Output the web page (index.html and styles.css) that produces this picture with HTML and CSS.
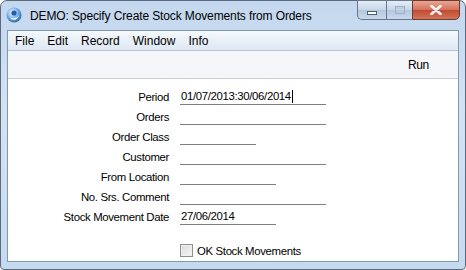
FILE: index.html
```html
<!DOCTYPE html>
<html lang="en">
<head>
  <meta charset="UTF-8" />
  <title>DEMO: Specify Create Stock Movements from Orders</title>
  <link rel="stylesheet" href="styles.css">
</head>
<body>
  <div class="window">
    <!-- Title bar -->
    <div class="titlebar">
      <svg class="app-icon" width="16" height="16" viewBox="0 0 16 16">
        <defs>
          <radialGradient id="g" cx="0.4" cy="0.35" r="0.7">
            <stop offset="0" stop-color="#ffffff"/>
            <stop offset="0.5" stop-color="#7fb4e6"/>
            <stop offset="1" stop-color="#1d5fa8"/>
          </radialGradient>
        </defs>
        <circle cx="8" cy="8" r="7.5" fill="url(#g)"/>
        <path d="M4 10 C5 14 12 14 13 8 C11 12 6 12 4 10 Z" fill="#ffffff"/>
        <circle cx="8" cy="6" r="2.6" fill="#1d5fa8"/>
      </svg>
      <span class="title">DEMO: Specify Create Stock Movements from Orders</span>
      <div class="controls">
        <div class="ctl ctl-min"><span class="min-bar"></span></div>
        <div class="ctl ctl-max"><span class="max-box"></span></div>
        <div class="ctl ctl-close">
          <svg width="12" height="10" viewBox="0 0 12 10">
            <path d="M1.5 1 L10.5 9 M10.5 1 L1.5 9" stroke="#ffffff" stroke-width="2.6" stroke-linecap="round"/>
            <path d="M1.5 1 L10.5 9 M10.5 1 L1.5 9" stroke="#d8d8d8" stroke-width="0.8"/>
          </svg>
        </div>
      </div>
    </div>

    <!-- Client area -->
    <div class="client">
      <div class="menubar">
        <span>File</span><span>Edit</span><span>Record</span><span>Window</span><span>Info</span>
      </div>
      <div class="toolbar">
        <span class="run">Run</span>
      </div>
      <div class="form">
        <div class="row"><label>Period</label><div class="field wide">01/07/2013:30/06/2014<span class="caret"></span></div></div>
        <div class="row"><label>Orders</label><div class="field wide"></div></div>
        <div class="row"><label>Order Class</label><div class="field short"></div></div>
        <div class="row"><label>Customer</label><div class="field wide"></div></div>
        <div class="row"><label>From Location</label><div class="field mid"></div></div>
        <div class="row"><label>No. Srs. Comment</label><div class="field wide"></div></div>
        <div class="row"><label>Stock Movement Date</label><div class="field mid">27/06/2014</div></div>
        <div class="check-row">
          <span class="checkbox"></span><span>OK Stock Movements</span>
        </div>
      </div>
    </div>
  </div>
</body>
</html>
```

FILE: styles.css
```css
/* —— Base —— */
* { box-sizing: border-box; margin: 0; padding: 0; }
body { width: 466px; height: 270px; overflow: hidden; background: #fff; font-family: "Liberation Sans", Arial, sans-serif; font-size: 12px; color: #000; }

/* —— Window frame —— */
.window {
  width: 466px;
  height: 270px;
  display: flex;
  flex-direction: column;
  border: 1px solid #5b6a7c;
  border-radius: 7px 7px 4px 4px;
  background: linear-gradient(to bottom, #c3d7ee 0%, #d4e3f3 40%, #c6daef 100%);
}

.titlebar { height: 28px; display: flex; align-items: center; padding-left: 5px; position: relative; }
.app-icon { margin-right: 8px; }
.title { font-size: 12px; letter-spacing: -0.12px; color: #000; padding-top: 1px; }

.controls { position: absolute; top: -1px; right: 5px; display: flex; }
.ctl { height: 20px; border: 1px solid #6a7889; display: flex; align-items: center; justify-content: center; }
.ctl-min { width: 29px; border-radius: 0 0 0 5px; border-right: none; background: linear-gradient(to bottom, #e4edf7, #c6d6e8 50%, #b3c7de 51%, #c8d9ec); }
.ctl-max { width: 26px; border-right: none; background: linear-gradient(to bottom, #e4edf7, #c6d6e8 50%, #b3c7de 51%, #c8d9ec); }
.ctl-close { width: 48px; border-radius: 0 0 5px 0; border-color: #6b3a33; background: linear-gradient(to bottom, #e8a793, #d4715a 50%, #c24a30 51%, #d2745a); }
.min-bar { width: 10px; height: 4px; margin-top: 5px; background: #fff; border: 1px solid #4f5e70; }
.max-box { width: 10px; height: 8px; border: 1px solid #9fb0c4; box-shadow: inset 0 2px 0 #c2cfdd; }

/* —— Client area —— */
.client {
  flex: 1;
  margin: 1px 6px 7px 6px;
  border: 1px solid #8297b0;
  background: #fff;
  display: flex;
  flex-direction: column;
}

.menubar {
  height: 20px;
  display: flex;
  align-items: center;
  gap: 13px;
  padding-left: 7px;
  background: linear-gradient(to bottom, #f6f9fd, #dde7f3);
  border-bottom: 1px solid #b6c3d3;
  font-size: 12px;
}

.toolbar {
  height: 28px;
  display: flex;
  align-items: center;
  justify-content: flex-end;
  padding-right: 29px;
  background: #f4f6f9;
  border-bottom: 1px solid #c9ced6;
}
.run { font-size: 12px; letter-spacing: -0.3px; }

/* —— Form —— */
.form { flex: 1; padding-top: 8px; font-size: 11.4px; letter-spacing: -0.35px; }
.row { height: 20px; display: flex; align-items: center; }
.row label { width: 172px; text-align: right; padding-right: 11px; }
.field { height: 15px; border-bottom: 1px solid #7d7d7d; line-height: 13px; padding-left: 1px; }
.wide { width: 146px; }
.mid { width: 96px; }
.short { width: 76px; }
.caret { display: inline-block; width: 1px; height: 13px; margin-left: 1px; background: #000; vertical-align: top; }

.check-row { display: flex; align-items: center; margin-top: 17px; padding-left: 172px; gap: 4px; }
.checkbox {
  width: 13px;
  height: 13px;
  border: 1px solid #8f8f8f;
  background: linear-gradient(135deg, #dcdcdc, #f6f6f6);
  box-shadow: inset 0 0 0 1px #f0f0f0;
}
```
